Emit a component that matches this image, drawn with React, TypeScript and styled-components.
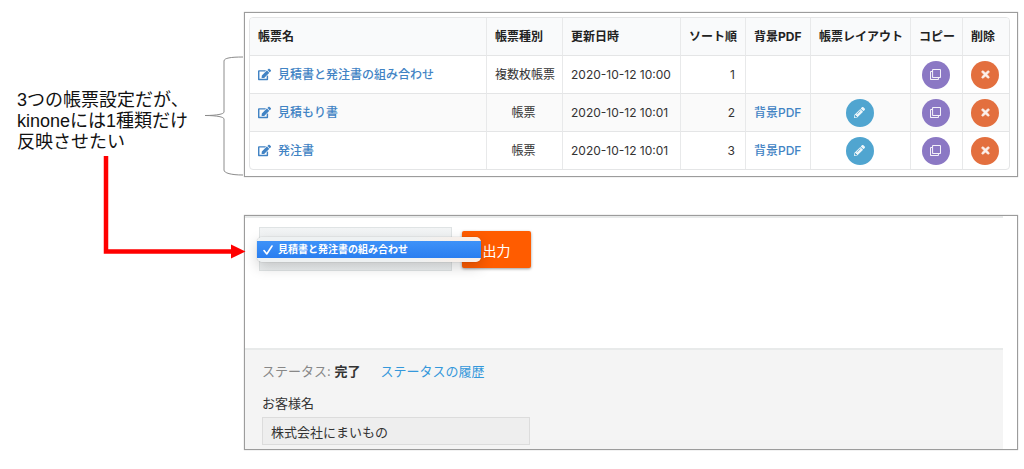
import React from "react";
import styled, { createGlobalStyle } from "styled-components";
import { FaEdit, FaPencilAlt, FaRegClone, FaTimes } from "react-icons/fa";

const GlobalStyle = createGlobalStyle`
  *, *::before, *::after { box-sizing: border-box; }
  body {
    margin: 0;
    background: #fff;
    color: #333;
    font-family: Inter, "Noto Sans CJK JP", sans-serif;
    font-size: 12px;
  }
  a { text-decoration: none; }
`;

const Page = styled.main`
  display: grid;
  grid-template-columns: 244px minmax(0, 1fr);
  padding: 12px 6px 18px 0;
`;

const Annotation = styled.aside`
  padding-top: 44px;
`;

const NoteRow = styled.div`
  display: flex;
  justify-content: space-between;
  align-items: center;
  height: 120px;
  padding-left: 17px;
`;

const Note = styled.p`
  margin: 0;
  padding-top: 10px;
  color: #111;
  font-family: "Liberation Sans", "Noto Sans CJK JP", sans-serif;
  font-size: 18px;
  line-height: 21px;
  white-space: nowrap;
`;

const Bracket = styled.svg`
  display: block;
  flex: none;
`;

const Arrow = styled.svg`
  display: block;
  position: relative;
  z-index: 1;
  margin-top: -20px;
  overflow: visible;
`;

const Panels = styled.div`
  display: flex;
  flex-direction: column;
  gap: 38px;
`;

const Panel = styled.section`
  border: 1px solid #9c9c9c;
  box-shadow: 0 0 1px #b4b4b4;
  background: #fff;
`;

const ListPanel = styled(Panel)`
  padding: 4px 7px 6px 4px;
`;

const Table = styled.table`
  width: 100%;
  table-layout: fixed;
  border: 1px solid #e4e5e6;
  border-radius: 4px;
  border-collapse: separate;
  border-spacing: 0;
  overflow: hidden;
`;

const Col = styled.col<{ $width?: number }>`
  width: ${(p) => (p.$width ? `${p.$width}px` : "auto")};
`;

const HeadCell = styled.th<{ $align?: string }>`
  height: 37px;
  padding: 0 8px;
  background: #f9fafb;
  color: #222;
  font-weight: 700;
  line-height: 18px;
  text-align: ${(p) => p.$align || "left"};
  white-space: nowrap;
  & + & { border-left: 1px solid #e8e9ea; }
`;

const Row = styled.tr`
  &:nth-child(even) { background: #fafafa; }
`;

const Cell = styled.td<{ $align?: string }>`
  height: 38px;
  padding: 0 10px 0 8px;
  border-top: 1px solid #e4e5e6;
  line-height: 18px;
  text-align: ${(p) => p.$align || "left"};
  white-space: nowrap;
  & + & { border-left: 1px solid #e8e9ea; }
`;

const NameLink = styled.a`
  display: inline-flex;
  align-items: center;
  gap: 7px;
  color: #4183c4;
  font-weight: 500;
  vertical-align: middle;
  svg { width: 13px; height: 13px; }
`;

const TextLink = styled.a`
  color: #4183c4;
  font-weight: 500;
`;

const RoundButton = styled.button<{ $color: string }>`
  display: inline-flex;
  align-items: center;
  justify-content: center;
  width: 28px;
  height: 28px;
  padding: 0;
  border: 0;
  border-radius: 50%;
  background: ${(p) => p.$color};
  color: #fff;
  vertical-align: middle;
  svg { width: 11px; height: 11px; opacity: 0.9; }
`;

const DeleteIcon = styled(FaTimes)`
  stroke-width: 36px;
`;

const RecordPanel = styled(Panel)`
  display: flex;
  flex-direction: column;
  padding-right: 14px;
`;

const OutputBar = styled.form`
  display: flex;
  align-items: flex-start;
  gap: 10px;
  height: 132px;
  padding: 9px 14px;
  border-top: 2px solid #e8eaea;
`;

const Picker = styled.div`
  position: relative;
  width: 193px;
`;

const Select = styled.select`
  display: block;
  appearance: none;
  width: 100%;
  height: 44px;
  border: 1px solid #dfe3e4;
  border-radius: 0;
  background: linear-gradient(#f2f4f5, #eceff0);
`;

const Menu = styled.ul`
  position: absolute;
  z-index: 2;
  top: 10px;
  left: -2px;
  width: 224px;
  margin: 0;
  padding: 4px 0;
  border-radius: 5px;
  background: linear-gradient(90deg, #eef1f2 70%, #fbeee6);
  box-shadow: 0 0 1px rgba(0, 0, 0, 0.4), 0 5px 14px rgba(0, 0, 0, 0.18);
  list-style: none;
`;

const MenuItem = styled.li`
  display: flex;
  align-items: center;
  gap: 5px;
  height: 17px;
  padding-left: 6px;
  background: linear-gradient(#3e92f8, #2a7ef0);
  color: #fff;
  font-size: 10px;
  font-weight: 700;
  line-height: 17px;
  white-space: nowrap;
`;

const OutputButton = styled.button`
  width: 69px;
  height: 37px;
  margin-top: 4px;
  padding: 0;
  border: 0;
  border-radius: 2px;
  background: #ff5c00;
  box-shadow: 0 1px 3px rgba(0, 0, 0, 0.4);
  color: #fff;
  font-family: inherit;
  font-size: 14px;
`;

const Details = styled.div`
  height: 101px;
  padding: 11px 17px 0;
  border-top: 2px solid #e8eaea;
  background: #f4f4f4;
  font-size: 13px;
  line-height: 20px;
`;

const StatusLine = styled.div`
  display: flex;
  gap: 20px;
`;

const Status = styled.span`
  color: #888;
  strong { color: #333; }
`;

const HistoryLink = styled.a`
  color: #3498db;
`;

const Field = styled.div`
  display: flex;
  flex-direction: column;
  align-items: flex-start;
  gap: 4px;
  margin-top: 12px;
`;

const FieldInput = styled.input`
  width: 268px;
  height: 28px;
  padding: 0 8px;
  border: 1px solid #dcdcdc;
  background: #eee;
  color: #333;
  font-family: inherit;
  font-size: 13px;
`;

type Form = {
  name: string;
  kind: string;
  updated: string;
  order: number;
  hasPdf: boolean;
};

const forms: Form[] = [
  { name: "見積書と発注書の組み合わせ", kind: "複数枚帳票", updated: "2020-10-12 10:00", order: 1, hasPdf: false },
  { name: "見積もり書", kind: "帳票", updated: "2020-10-12 10:01", order: 2, hasPdf: true },
  { name: "発注書", kind: "帳票", updated: "2020-10-12 10:01", order: 3, hasPdf: true },
];

function FormRow({ form }: { form: Form }) {
  return (
    <Row>
      <Cell>
        <NameLink href="#">
          <FaEdit />
          {form.name}
        </NameLink>
      </Cell>
      <Cell $align="center">{form.kind}</Cell>
      <Cell>{form.updated}</Cell>
      <Cell $align="right">{form.order}</Cell>
      <Cell>{form.hasPdf && <TextLink href="#">背景PDF</TextLink>}</Cell>
      <Cell $align="center">
        {form.hasPdf && (
          <RoundButton type="button" $color="#50a5d0" aria-label="帳票レイアウト">
            <FaPencilAlt />
          </RoundButton>
        )}
      </Cell>
      <Cell $align="center">
        <RoundButton type="button" $color="#8b78c4" aria-label="コピー">
          <FaRegClone />
        </RoundButton>
      </Cell>
      <Cell $align="center">
        <RoundButton type="button" $color="#e36f3e" aria-label="削除">
          <DeleteIcon />
        </RoundButton>
      </Cell>
    </Row>
  );
}

export default function App() {
  return (
    <>
      <GlobalStyle />
      <Page>
        <Annotation>
          <NoteRow>
            <Note>
              3つの帳票設定だが、
              <br />
              kinoneには1種類だけ
              <br />
              反映させたい
            </Note>
            <Bracket width="39" height="120" viewBox="0 0 39 120" fill="none" stroke="#8c8c8c" aria-hidden="true">
              <path d="M38 1C26 1 19 2 19 5V56C19 58 12 59.500 0 59.500C12 59.500 19 61 19 63V114C19 117 26 119 38 119" />
            </Bracket>
          </NoteRow>
          <Arrow width="244" height="104" viewBox="0 0 244 104" aria-hidden="true">
            <path d="M106 0V95.500H233" fill="none" stroke="#f00" strokeWidth="4.500" />
            <path d="M231 88.500L245.500 95.500L231 102.500Z" fill="#f00" />
          </Arrow>
        </Annotation>

        <Panels>
          <ListPanel>
            <Table>
              <colgroup>
                <Col />
                <Col $width={76} />
                <Col $width={118} />
                <Col $width={65} />
                <Col $width={65} />
                <Col $width={100} />
                <Col $width={52} />
                <Col $width={47} />
              </colgroup>
              <thead>
                <tr>
                  <HeadCell>帳票名</HeadCell>
                  <HeadCell>帳票種別</HeadCell>
                  <HeadCell>更新日時</HeadCell>
                  <HeadCell $align="right">ソート順</HeadCell>
                  <HeadCell>背景PDF</HeadCell>
                  <HeadCell>帳票レイアウト</HeadCell>
                  <HeadCell>コピー</HeadCell>
                  <HeadCell>削除</HeadCell>
                </tr>
              </thead>
              <tbody>
                {forms.map((form) => (
                  <FormRow key={form.order} form={form} />
                ))}
              </tbody>
            </Table>
          </ListPanel>

          <RecordPanel>
            <OutputBar>
              <Picker>
                <Select aria-label="帳票">
                  <option aria-label="未選択" />
                </Select>
                <Menu role="listbox">
                  <MenuItem role="option" aria-selected="true">
                    <svg width="10" height="10" viewBox="0 0 10 10" fill="none" stroke="#fff" strokeWidth="1.600" strokeLinecap="round" strokeLinejoin="round" aria-hidden="true">
                      <path d="M1 5.500L3.800 9L9 1" />
                    </svg>
                    見積書と発注書の組み合わせ
                  </MenuItem>
                </Menu>
              </Picker>
              <OutputButton type="button">出力</OutputButton>
            </OutputBar>
            <Details>
              <StatusLine>
                <Status>
                  ステータス: <strong>完了</strong>
                </Status>
                <HistoryLink href="#">ステータスの履歴</HistoryLink>
              </StatusLine>
              <Field>
                <label htmlFor="customer">お客様名</label>
                <FieldInput id="customer" defaultValue="株式会社にまいもの" readOnly />
              </Field>
            </Details>
          </RecordPanel>
        </Panels>
      </Page>
    </>
  );
}
